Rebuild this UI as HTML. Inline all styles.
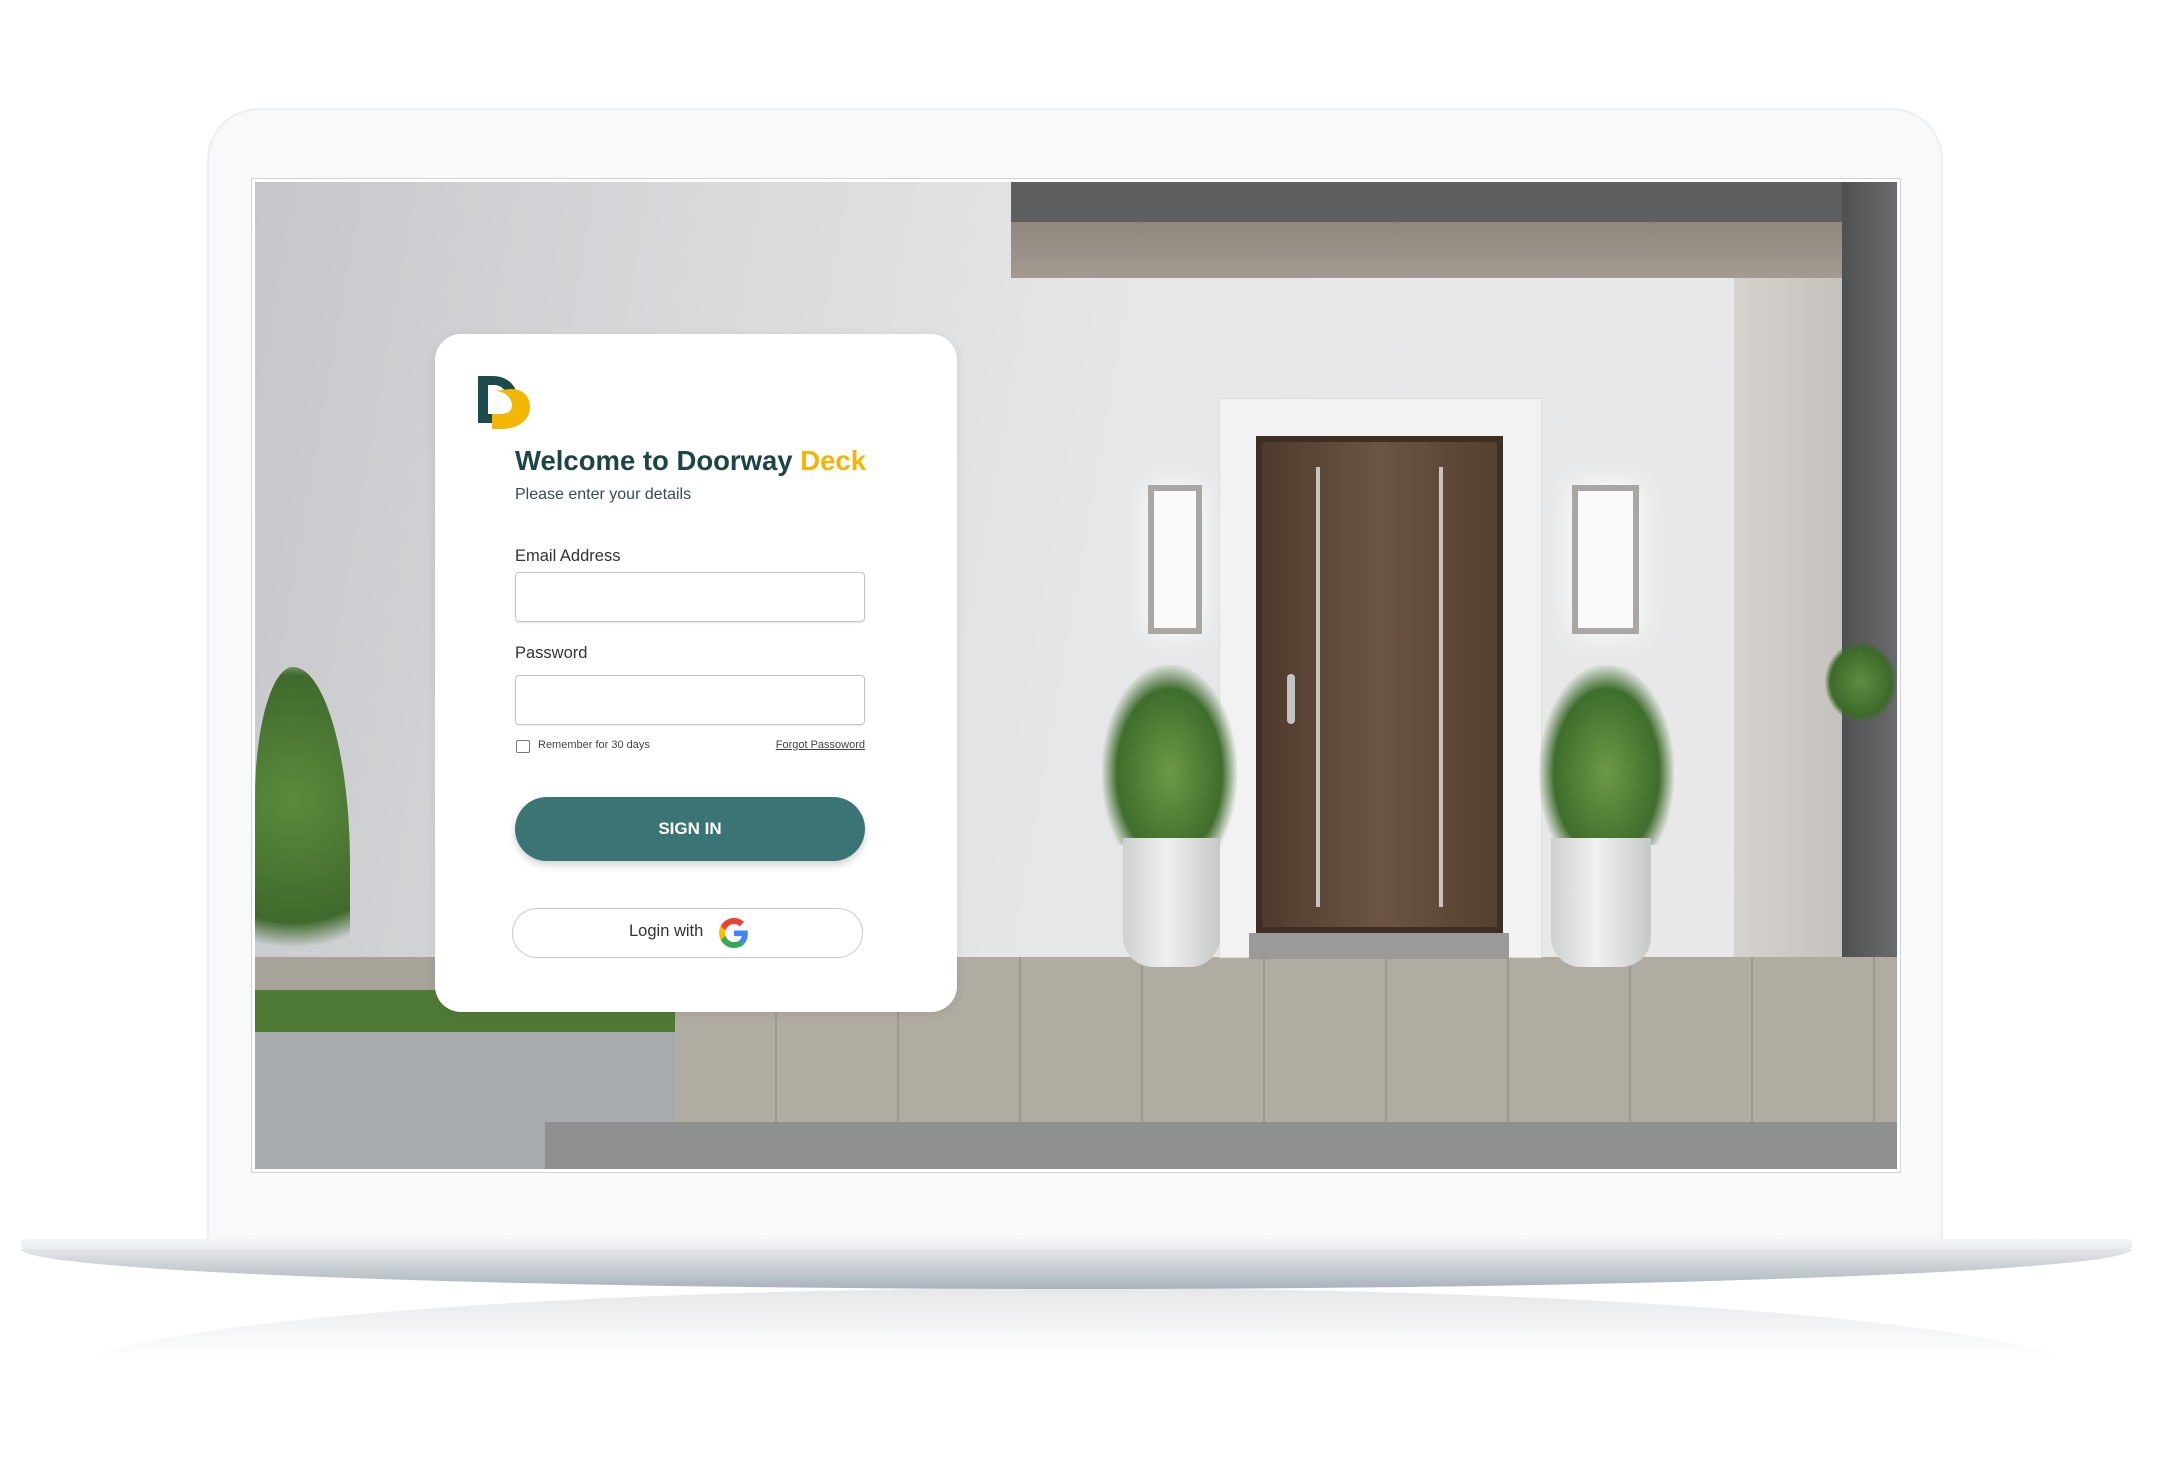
<!DOCTYPE html>
<html><head><meta charset="utf-8"><style>
*{margin:0;padding:0;box-sizing:border-box}
body{width:2161px;height:1462px;background:#fff;position:relative;overflow:hidden;font-family:"Liberation Sans",sans-serif}
.a{position:absolute}
</style></head><body>
<div class="a" style="left:60px;top:1288px;width:2030px;height:90px;border-radius:50%/100% 100% 0 0;background:linear-gradient(#e6e7e9,#fff 80%)"></div>
<div class="a" style="left:207px;top:108px;width:1736px;height:1160px;border-radius:52px 52px 0 0;background:#f8f9fb;border:2px solid #eceef1"></div>
<div class="a" style="left:251px;top:178px;width:1650px;height:995px;border:1px solid #cfd2d6;background:#fff"></div>
<div class="a" style="left:255px;top:182px;width:1642px;height:987px;overflow:hidden;background:linear-gradient(100deg,#c5c7ca 0%,#d8d9db 25%,#e6e7e8 50%,#e9e9ea 100%)">
  <div class="a" style="left:756px;top:0;width:886px;height:40px;background:#5e5f60"></div>
  <div class="a" style="left:756px;top:40px;width:831px;height:56px;background:linear-gradient(#8f867c,#a39b91)"></div>
  <div class="a" style="left:1479px;top:96px;width:108px;height:720px;background:linear-gradient(90deg,#d6d3ce,#c5c2bd)"></div>
  <div class="a" style="left:1587px;top:0;width:55px;height:815px;background:linear-gradient(90deg,#4f5052,#6a6b6c)"></div>
  <div class="a" style="left:0;top:775px;width:1642px;height:212px;background:#a8a398"></div>
  <div class="a" style="left:400px;top:775px;width:1242px;height:175px;background:repeating-linear-gradient(90deg,#b3ada2 0 120px,#9d978c 120px 122px),#b0aa9f;opacity:.9"></div>
  <div class="a" style="left:0;top:808px;width:420px;height:42px;background:#4e7a35"></div>
  <div class="a" style="left:0;top:850px;width:420px;height:137px;background:#a7abae"></div>
  <div class="a" style="left:290px;top:940px;width:1352px;height:47px;background:#8e8f8f"></div>
  <div class="a" style="left:0;top:485px;width:95px;height:330px;border-radius:40% 60% 20% 10%;background:radial-gradient(circle at 40% 40%,#5b8a3c,#3f6a2c 60%,transparent 72%)"></div>
  <div class="a" style="left:1570px;top:460px;width:72px;height:80px;border-radius:50%;background:radial-gradient(#5e8c3f,#3d6a2b 60%,transparent 72%)"></div>
  <div class="a" style="left:964px;top:216px;width:323px;height:560px;background:#f2f2f2;border:1px solid #dcdcdc"></div>
  <div class="a" style="left:1001px;top:254px;width:247px;height:497px;background:linear-gradient(90deg,#4e3a2c,#6b5443 50%,#54402f);border:6px solid #3f2e22"></div>
  <div class="a" style="left:1061px;top:285px;width:4px;height:440px;background:#c9c4be"></div>
  <div class="a" style="left:1184px;top:285px;width:4px;height:440px;background:#c9c4be"></div>
  <div class="a" style="left:1032px;top:492px;width:8px;height:50px;border-radius:4px;background:#c4c4c4"></div>
  <div class="a" style="left:994px;top:751px;width:260px;height:26px;background:#9a9a9a"></div>
  <div class="a" style="left:893px;top:303px;width:54px;height:149px;background:#fafafa;border:6px solid #a9a7a3;box-shadow:0 0 30px #fff"></div>
  <div class="a" style="left:1317px;top:303px;width:67px;height:149px;background:#fafafa;border:6px solid #a9a7a3;box-shadow:0 0 30px #fff"></div>
  <div class="a" style="left:847px;top:483px;width:135px;height:180px;border-radius:45% 45% 10% 10%;background:radial-gradient(ellipse at 50% 60%,#6b9a46,#3f6d2c 55%,transparent 72%)"></div>
  <div class="a" style="left:1284px;top:483px;width:135px;height:180px;border-radius:45% 45% 10% 10%;background:radial-gradient(ellipse at 50% 60%,#6b9a46,#3f6d2c 55%,transparent 72%)"></div>
  <div class="a" style="left:868px;top:656px;width:97px;height:129px;border-radius:0 0 30px 30px;background:linear-gradient(90deg,#cfd0d0,#f0f0f0 45%,#c7c8c8)"></div>
  <div class="a" style="left:1296px;top:656px;width:100px;height:129px;border-radius:0 0 30px 30px;background:linear-gradient(90deg,#cfd0d0,#f0f0f0 45%,#c7c8c8)"></div>
  <div class="a" style="left:180px;top:152px;width:522px;height:678px;background:#fff;border-radius:26px;box-shadow:0 2px 10px rgba(0,0,0,.08)">
    <svg class="a" style="left:43px;top:42px" width="52" height="53" viewBox="0 0 52 53">
      <path d="M0 0H14C32 0 40 12 40 26C40 40 32 47 18 47H0Z M10 9V38H16C24 38 29 33 29 24C29 15 24 9 16 9Z" fill="#1d4a4c" fill-rule="evenodd"/>
      <path d="M16 15C26 15 34 21 34 29C34 36 29 38 22 38H14V53H24C40 53 52 44 52 31C52 19 44 13 32 13Z" fill="#f2b705"/>
      <path d="M14 38H22C29 38 34 36 34 29C34 21 26 15 16 15V38Z" fill="#fff"/>
    </svg>
    <div class="a" style="left:80px;top:111px;font-size:27.5px;font-weight:bold;color:#1d4547;white-space:nowrap">Welcome to Doorway <span style="color:#f4b400">Deck</span></div>
    <div class="a" style="left:80px;top:152px;font-size:16px;color:#3a4a4c">Please enter your details</div>
    <div class="a" style="left:80px;top:213px;font-size:16.5px;color:#333">Email Address</div>
    <div class="a" style="left:80px;top:238px;width:350px;height:50px;border:1.5px solid #c4c4c4;border-radius:4px;box-shadow:0 1px 2px rgba(0,0,0,.1)"></div>
    <div class="a" style="left:80px;top:310px;font-size:16.5px;color:#333">Password</div>
    <div class="a" style="left:80px;top:341px;width:350px;height:50px;border:1.5px solid #c4c4c4;border-radius:4px;box-shadow:0 1px 2px rgba(0,0,0,.1)"></div>
    <div class="a" style="left:81px;top:406px;width:14px;height:13px;border:1.5px solid #777;border-radius:2px"></div>
    <div class="a" style="left:103px;top:405px;font-size:11px;color:#444">Remember for 30 days</div>
    <div class="a" style="left:340px;top:405px;width:90px;text-align:right;font-size:11px;color:#444;text-decoration:underline;white-space:nowrap">Forgot Passoword</div>
    <div class="a" style="left:80px;top:463px;width:350px;height:64px;border-radius:32px;background:#3a7475;box-shadow:0 4px 8px rgba(0,0,0,.18);color:#fff;font-size:17px;font-weight:bold;text-align:center;line-height:64px">SIGN IN</div>
    <div class="a" style="left:77px;top:574px;width:351px;height:50px;border-radius:25px;border:1.5px solid #c9c9c9"></div>
    <div class="a" style="left:194px;top:588px;font-size:16.5px;color:#333">Login with</div>
    <svg class="a" style="left:284px;top:584px" width="30" height="30" viewBox="0 0 48 48">
      <path fill="#EA4335" d="M24 9.5c3.5 0 6.6 1.2 9.1 3.6l6.8-6.8C35.8 2.4 30.3 0 24 0 14.6 0 6.6 5.4 2.7 13.3l7.9 6.2C12.5 13.6 17.7 9.5 24 9.5z"/>
      <path fill="#4285F4" d="M46.1 24.5c0-1.6-.1-3.1-.4-4.5H24v9h12.4c-.5 2.9-2.2 5.3-4.6 6.9l7.7 6c4.5-4.1 6.6-10.2 6.6-17.4z"/>
      <path fill="#FBBC05" d="M10.5 28.6c-.5-1.4-.8-3-.8-4.6s.3-3.2.8-4.6l-7.9-6.2C1 16.5 0 20.1 0 24s1 7.5 2.7 10.8l7.8-6.2z"/>
      <path fill="#34A853" d="M24 48c6.5 0 11.9-2.1 15.9-5.8l-7.7-6c-2.2 1.5-5 2.3-8.2 2.3-6.3 0-11.6-4.2-13.5-10l-7.9 6.2C6.6 42.6 14.6 48 24 48z"/>
    </svg>
  </div>
</div>
<div class="a" style="left:21px;top:1239px;width:2111px;height:10px;border-radius:4px;background:linear-gradient(#f3f4f6,#e9ebee)"></div>
<div class="a" style="left:21px;top:1249px;width:2111px;height:40px;border-radius:0 0 50% 50%/0 0 100% 100%;background:linear-gradient(#e4e6e9,#a9b3bc)"></div>
</body></html>
